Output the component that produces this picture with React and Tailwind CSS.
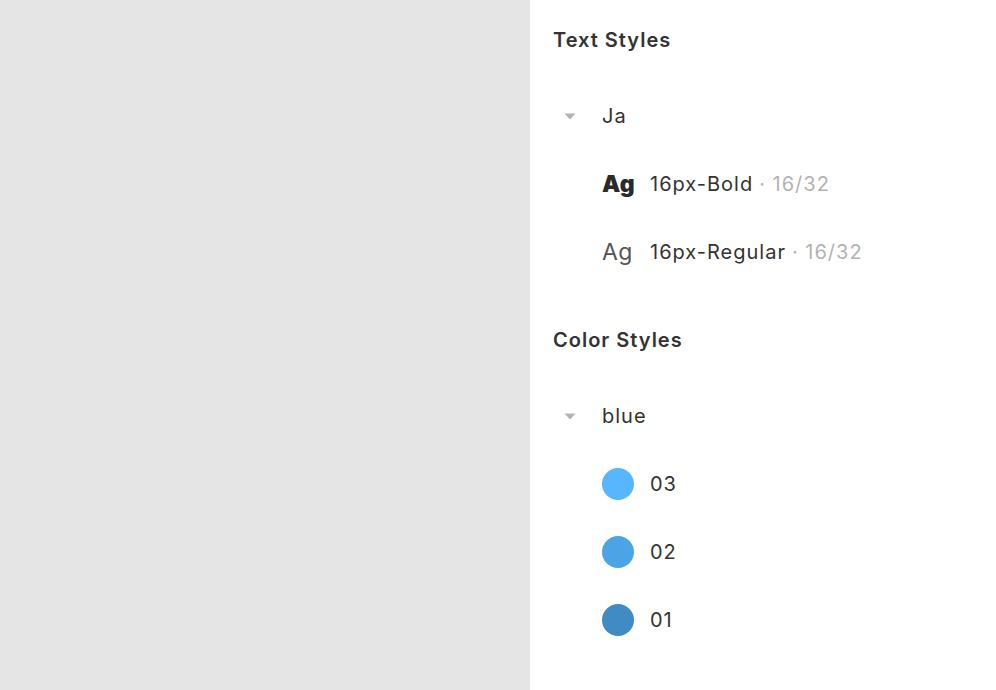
import React from 'react'

const font = { fontFamily: 'Inter, "Noto Sans", sans-serif' }

function Caret(){
  return (
    <svg width="12" height="7" viewBox="0 0 12 7" className="ml-[11px]">
      <path d="M0.5 0.5 L11.5 0.5 L6 6.5 Z" fill="#b3b3b3" />
    </svg>
  )
}

function Group({ label }){
  return (
    <div className="h-[68px] flex items-center">
      <Caret />
      <span className="ml-[26px] text-[20px] tracking-[1px] text-[#333]">{label}</span>
    </div>
  )
}

function TextRow({ bold, name }){
  return (
    <div className="h-[68px] flex items-center pl-[49px]">
      <span className={`w-[48px] text-[23px] tracking-[0.5px] ${bold ? 'font-black text-[#2a2a2a]' : 'font-normal text-[#555]'}`}>Ag</span>
      <span className="text-[20px] tracking-[1px] text-[#333]">{name}</span>
      <span className="text-[20px] tracking-[1px] text-[#b3b3b3] ml-[6px]">· 16/32</span>
    </div>
  )
}

function ColorRow({ color, name }){
  return (
    <div className="h-[68px] flex items-center pl-[49px]">
      <span className="w-[32px] h-[32px] rounded-full" style={{ background: color }} />
      <span className="ml-[16px] text-[20px] tracking-[1px] text-[#333]">{name}</span>
    </div>
  )
}

export default function App(){
  const colors = [
    { name: '03', color: '#57b6fd' },
    { name: '02', color: '#4ba4e5' },
    { name: '01', color: '#418bc4' },
  ]
  return (
    <div className="w-[996px] h-[690px] flex overflow-hidden" style={font}>
      <div className="w-[530px] h-full bg-[#e5e5e5]" />
      <div className="flex-1 bg-white pl-[23px] pt-[6px]">
        <div className="h-[68px] flex items-center text-[20px] font-semibold tracking-[1px] text-[#333]">Text Styles</div>
        <div className="mt-2">
          <Group label="Ja" />
          <TextRow bold name="16px-Bold" />
          <TextRow name="16px-Regular" />
        </div>
        <div className="h-[68px] mt-5 flex items-center text-[20px] font-semibold tracking-[1px] text-[#333]">Color Styles</div>
        <div className="mt-2">
          <Group label="blue" />
          {colors.map(c => <ColorRow key={c.name} {...c} />)}
        </div>
      </div>
    </div>
  )
}
